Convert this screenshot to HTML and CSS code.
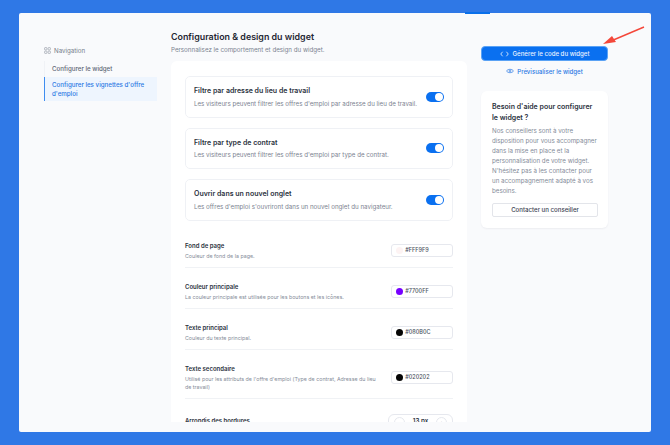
FILE: index.html
```html
<!DOCTYPE html>
<html lang="fr">

<head>
    <meta charset="UTF-8">
    <title>Configuration & design du widget</title>
    <link rel="stylesheet" href="styles.css">
</head>

<body>
    <div class="panel">
        <span class="tab-mark"></span>

        <nav class="sidebar">
            <div class="nav-title">
                <svg class="nav-icon" viewBox="0 0 12 12">
                    <rect x="1" y="1" width="4" height="4" rx="1"></rect>
                    <rect x="7" y="1" width="4" height="4" rx="1"></rect>
                    <rect x="1" y="7" width="4" height="4" rx="1"></rect>
                    <rect x="7" y="7" width="4" height="4" rx="1"></rect>
                </svg>
                Navigation
            </div>
            <div class="nav-list">
                <a class="nav-link">Configurer le widget</a>
                <a class="nav-link active">Configurer les vignettes d'offre d'emploi</a>
            </div>
        </nav>

        <main class="main">
            <h1>Configuration &amp; design du widget</h1>
            <p class="subtitle">Personnalisez le comportement et design du widget.</p>

            <div class="card">
                <div class="option">
                    <div>
                        <h3>Filtre par adresse du lieu de travail</h3>
                        <p>Les visiteurs peuvent filtrer les offres d'emploi par adresse du lieu de travail.</p>
                    </div>
                    <span class="switch"></span>
                </div>
                <div class="option">
                    <div>
                        <h3>Filtre par type de contrat</h3>
                        <p>Les visiteurs peuvent filtrer les offres d'emploi par type de contrat.</p>
                    </div>
                    <span class="switch"></span>
                </div>
                <div class="option">
                    <div>
                        <h3>Ouvrir dans un nouvel onglet</h3>
                        <p>Les offres d'emploi s'ouvriront dans un nouvel onglet du navigateur.</p>
                    </div>
                    <span class="switch"></span>
                </div>

                <div class="setting first">
                    <div class="setting-text">
                        <h4>Fond de page</h4>
                        <p>Couleur de fond de la page.</p>
                    </div>
                    <div class="color-input"><span class="dot dot-page"></span>#FFF9F9</div>
                </div>
                <div class="setting">
                    <div class="setting-text">
                        <h4>Couleur principale</h4>
                        <p>La couleur principale est utilisée pour les boutons et les icônes.</p>
                    </div>
                    <div class="color-input"><span class="dot dot-main"></span>#7700FF</div>
                </div>
                <div class="setting">
                    <div class="setting-text">
                        <h4>Texte principal</h4>
                        <p>Couleur du texte principal.</p>
                    </div>
                    <div class="color-input"><span class="dot dot-dark"></span>#080B0C</div>
                </div>
                <div class="setting">
                    <div class="setting-text">
                        <h4>Texte secondaire</h4>
                        <p>Utilisé pour les attributs de l'offre d'emploi (Type de contrat, Adresse du lieu de travail)</p>
                    </div>
                    <div class="color-input"><span class="dot dot-dark"></span>#020202</div>
                </div>
                <div class="setting last">
                    <div class="setting-text">
                        <h4>Arrondis des bordures</h4>
                    </div>
                    <div class="stepper">
                        <span class="step">−</span>
                        <span class="step-value">13 px</span>
                        <span class="step">+</span>
                    </div>
                </div>
            </div>
        </main>

        <aside class="aside">
            <button class="primary">
                <svg class="code-icon" viewBox="0 0 12 8">
                    <path d="M3.5 1 L1 4 L3.5 7 M8.500 1 L11 4 L8.500 7"></path>
                </svg>
                Générer le code du widget
            </button>
            <a class="preview">
                <svg class="eye-icon" viewBox="0 0 12 8">
                    <path d="M0.700 4 C2.500 0.600 9.500 0.600 11.300 4 C9.500 7.400 2.500 7.400 0.700 4 Z"></path>
                    <circle cx="6" cy="4" r="1.400"></circle>
                </svg>
                Prévisualiser le widget
            </a>
            <div class="help">
                <h3>Besoin d'aide pour configurer le widget ?</h3>
                <p>Nos conseillers sont à votre disposition pour vous accompagner dans la mise en place et la personnalisation de votre widget. N'hésitez pas à les contacter pour un accompagnement adapté à vos besoins.</p>
                <button class="secondary">Contacter un conseiller</button>
            </div>
        </aside>

        <svg class="arrow" viewBox="0 0 50 26">
            <path class="arrow-line" d="M47 2 L14 16"></path>
            <path class="arrow-head" d="M6 19 L15 11 L19 17 Z"></path>
        </svg>
    </div>
</body>

</html>
```

FILE: styles.css
```css
* {
    box-sizing: border-box;
}

html, body {
    height: 100%;
}

body {
    margin: 0;
    padding: 13px 19px;
    background: #2f78e6;
    font-family: Inter, "Liberation Sans", sans-serif;
    overflow: hidden;
}

h1, h3, h4, p {
    margin: 0;
}

.panel {
    position: relative;
    display: flex;
    align-items: flex-start;
    height: 419px;
    padding: 0 0 10px 25px;
    background: #f9fafc;
    border-radius: 2px;
}

.tab-mark {
    position: absolute;
    top: -1px;
    left: 446px;
    width: 25px;
    height: 2px;
    background: #0a70ea;
}

/* sidebar */
.sidebar {
    width: 113px;
    margin-top: 32px;
    margin-right: 14px;
    flex-shrink: 0;
}

.nav-title {
    display: flex;
    align-items: center;
    gap: 3px;
    height: 10px;
    font-size: 6.200px;
    color: #747b89;
}

.nav-icon {
    width: 7px;
    height: 7px;
    fill: none;
    stroke: #8a909c;
    stroke-width: 1;
}

.nav-list {
    margin-top: 6px;
    border-left: 1px solid #f0f2f6;
}

.nav-link {
    display: block;
    padding: 3px 4px 3px 7px;
    font-size: 6.200px;
    line-height: 9px;
    font-weight: 500;
    color: #5e6675;
}

.nav-link.active {
    margin-left: -1px;
    margin-top: 1px;
    padding: 3px 4px 3px 7px;
    border-left: 1px solid #3f8df0;
    background: #eef5fe;
    color: #2b78e4;
}

/* main column */
.main {
    width: 296px;
    height: 409px;
    padding-top: 18px;
    margin-right: 14px;
    flex-shrink: 0;
    display: flex;
    flex-direction: column;
}

h1 {
    font-size: 8.900px;
    line-height: 11px;
    font-weight: 600;
    color: #1f2633;
}

.subtitle {
    margin-top: 3px;
    font-size: 6.200px;
    line-height: 9px;
    color: #7b8290;
}

.card {
    flex: 1;
    margin-top: 7px;
    padding: 15px 14px 0;
    background: #fff;
    border-radius: 6px 6px 0 0;
    overflow: hidden;
}

.option {
    display: flex;
    align-items: center;
    justify-content: space-between;
    height: 41.500px;
    margin-bottom: 10px;
    padding: 0 8px;
    border: 1px solid #eff1f5;
    border-radius: 5px;
}

.option h3 {
    font-size: 7px;
    line-height: 10px;
    font-weight: 600;
    color: #2b3240;
}

.option p {
    margin-top: 2.500px;
    font-size: 6.200px;
    line-height: 9px;
    color: #7b8290;
}

.switch {
    position: relative;
    width: 18px;
    height: 10px;
    border-radius: 5px;
    background: #0a70f0;
    flex-shrink: 0;
}

.switch::after {
    content: "";
    position: absolute;
    top: 1px;
    right: 1px;
    width: 8px;
    height: 8px;
    border-radius: 50%;
    background: #fff;
}

.setting {
    display: flex;
    align-items: center;
    justify-content: space-between;
    gap: 8px;
    padding: 14px 0 7px;
    border-bottom: 1px solid #f0f2f5;
}

.setting.first {
    padding-top: 10px;
}

.setting.last {
    align-items: flex-start;
    padding-top: 17px;
    border-bottom: none;
}

.setting-text {
    width: 199px;
}

.setting h4 {
    font-size: 6px;
    line-height: 10px;
    font-weight: 600;
    color: #2b3240;
}

.setting p {
    margin-top: 1px;
    font-size: 5.300px;
    line-height: 8px;
    color: #858c99;
}

.color-input {
    display: flex;
    align-items: center;
    gap: 2.500px;
    width: 62px;
    height: 13px;
    padding-left: 3.500px;
    border: 1px solid #e6e8ee;
    border-radius: 3px;
    font-size: 5.500px;
    font-weight: 500;
    color: #4a5160;
}

.dot {
    width: 7px;
    height: 7px;
    border-radius: 50%;
}

.dot-page {
    background: #fdf3f3;
}

.dot-main {
    background: #7700ff;
}

.dot-dark {
    background: #050505;
}

.stepper {
    display: flex;
    align-items: center;
    justify-content: space-between;
    width: 66px;
    height: 14px;
    margin-top: -2px;
    padding: 0 5px;
    border: 1px solid #e6e8ee;
    border-radius: 6px;
}

.step {
    display: flex;
    align-items: center;
    justify-content: center;
    width: 11px;
    height: 11px;
    margin-top: 3px;
    border: 1px solid #e6e8ee;
    border-radius: 50%;
    font-size: 7px;
    color: #6b7280;
}

.step-value {
    font-size: 6.200px;
    line-height: 8px;
    font-weight: 600;
    color: #2b3240;
}

/* right column */
.aside {
    width: 127px;
    padding-top: 33px;
    flex-shrink: 0;
}

.primary {
    display: flex;
    align-items: center;
    justify-content: center;
    gap: 4px;
    width: 100%;
    height: 15px;
    padding: 0;
    border: 1px solid #5aa2f5;
    border-radius: 4px;
    background: #0a70f0;
    color: #eaf3ff;
    font-family: inherit;
    font-size: 6.100px;
    font-weight: 500;
}

.code-icon {
    width: 9px;
    height: 6px;
    fill: none;
    stroke: #fff;
    stroke-width: 1;
}

.preview {
    display: flex;
    align-items: center;
    justify-content: center;
    gap: 3px;
    height: 10px;
    margin-top: 5px;
    font-size: 6.100px;
    font-weight: 500;
    color: #2b78e4;
}

.eye-icon {
    width: 8px;
    height: 6px;
    fill: none;
    stroke: #2b78e4;
    stroke-width: 1;
}

.help {
    margin-top: 15px;
    padding: 11px 10px 11px 11px;
    background: #fff;
    border-radius: 6px;
    box-shadow: 0 1px 2px rgba(30, 40, 60, 0.06);
}

.help h3 {
    font-size: 7px;
    line-height: 10.500px;
    font-weight: 600;
    color: #2b3240;
}

.help p {
    margin-top: 3px;
    font-size: 6.200px;
    line-height: 10px;
    color: #838a98;
}

.secondary {
    width: 100%;
    height: 14px;
    margin-top: 4px;
    padding: 0;
    background: #fff;
    border: 1px solid #e3e5ea;
    border-radius: 2px;
    font-family: inherit;
    font-size: 6.100px;
    font-weight: 500;
    color: #3a4150;
}

.arrow {
    position: absolute;
    top: 12px;
    left: 578px;
    width: 50px;
    height: 26px;
}

.arrow-line {
    fill: none;
    stroke: #f4473a;
    stroke-width: 1.400;
}

.arrow-head {
    fill: #f4473a;
}
```
